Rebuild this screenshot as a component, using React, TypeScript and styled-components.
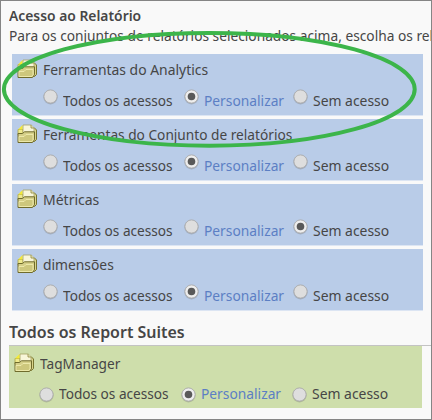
import React, { useLayoutEffect, useRef, useState } from 'react';
import styled, { createGlobalStyle } from 'styled-components';

const Global = createGlobalStyle`
  * { box-sizing: border-box; }
  body { margin: 0; background: #f9f9f9; }
`;

const Page = styled.main`
  position: relative;
  width: 432px;
  height: 420px;
  overflow: hidden;
  border: 1px solid #858585;
  background: #f9f9f9;
  color: #464646;
  font-family: 'Noto Sans', 'Open Sans', sans-serif;
  font-size: 15px;
  line-height: 20px;
`;

const Intro = styled.header`
  height: 53px;
  padding: 4px 0 0 8px;
`;

const Title = styled.h2`
  height: 20px;
  margin: 0;
  font-size: 14.8px;
  font-weight: 600;
`;

const Lead = styled.p`
  height: 20px;
  margin: 0;
`;

const List = styled.div`
  display: flex;
  flex-direction: column;
  gap: 4px;
  margin-left: 11px;
  width: 411px;
`;

const Group = styled.section<{ $green?: boolean }>`
  height: ${p => (p.$green ? 62 : 61)}px;
  width: ${p => (p.$green ? 413 : 411)}px;
  background: ${p => (p.$green ? '#cedeab' : '#b9cce8')};
  box-shadow: ${p => (p.$green ? 'none' : '0 0.6px 0 #c8d7ef')};
`;

const GroupHead = styled.div<{ $green?: boolean }>`
  display: flex;
  height: 31px;
  padding: ${p => (p.$green ? '7px 0 0 4.5px' : '5px 0 0 5px')};
`;

const GroupName = styled.div<{ $green?: boolean }>`
  margin-left: ${p => (p.$green ? 5.5 : 5)}px;
`;

const Options = styled.div<{ $green?: boolean }>`
  display: grid;
  grid-template-columns: ${p => (p.$green ? '142px 111px 1fr' : '141px 109px 1fr')};
  padding-left: ${p => (p.$green ? 30 : 31)}px;
`;

const Option = styled.label<{ $green?: boolean }>`
  display: flex;
  align-items: flex-start;
  gap: ${p => (p.$green ? 5 : 4.5)}px;
`;

const OptionText = styled.span<{ $link?: boolean; $green?: boolean }>`
  margin-top: ${p => (p.$green ? 6 : 5)}px;
  color: ${p => (p.$link ? '#5c7fc4' : '#464646')};
`;

const Heading = styled.h2`
  height: 36px;
  margin: 0 0 0 8px;
  padding-top: 12px;
  border-bottom: 1px solid #c3c3c3;
  font-size: 16.6px;
  font-weight: 600;
`;

const GreenWrap = styled.div`
  margin-left: 8px;
`;

const Clip = styled.span`
  display: block;
  white-space: nowrap;
`;

const Run = styled.span`
  display: inline-block;
  transform-origin: 0 0;
`;

const RadioSvg = styled.svg<{ $green?: boolean }>`
  display: block;
  flex: none;
  margin-top: ${p => (p.$green ? 10 : 4)}px;
`;

const Highlight = styled.svg`
  position: absolute;
  left: -1px;
  top: -1px;
  pointer-events: none;
`;

/* Condenses a single line of text so that it spans the given width. */
function Fit({ width, children }: { width: number; children: string }) {
  const ref = useRef<HTMLSpanElement>(null);
  const [scale, setScale] = useState(1);
  useLayoutEffect(() => {
    if (ref.current) setScale(width / ref.current.offsetWidth);
  }, [width, children]);
  return (
    <Clip>
      <Run ref={ref} style={{ transform: `scaleX(${scale})` }}>{children}</Run>
    </Clip>
  );
}

function Folder() {
  return (
    <svg width="21" height="20" viewBox="0 0 21 20">
      <path d="M14 3.5H17L19.5 6V15.5L17.5 17.5H14Z" fill="#d9d48c" stroke="#77732f" strokeLinejoin="round" />
      <path d="M1 5.5H6V11H1Z" fill="#efe98e" stroke="#a8a244" strokeWidth=".8" />
      <path d="M6 1H14.2L17 3.8V12H6Z" fill="#f8f6da" stroke="#a5a263" strokeWidth=".8" />
      <path d="M14 1V4H17" fill="#e8e5bd" stroke="#8d893c" strokeWidth=".8" />
      <path d="M1 18.5V9.5H5.5L7.5 7.8H17.5V15.8L15.5 18.5Z" fill="#d5cf88" stroke="#6f6b2c" strokeLinejoin="round" />
      <path d="M2 17.5V12.5H7L9 10.5H16V15.5L14.8 17.5Z" fill="#cdc77c" stroke="#f3efb4" strokeWidth=".8" />
      <path d="M1 5.5L5.5 1V5.5Z" fill="#f5ea35" />
    </svg>
  );
}

function Radio({ on, green }: { on: boolean; green?: boolean }) {
  return (
    <RadioSvg $green={green} width="15" height="16" viewBox="0 0 15 16">
      <circle cx="7.5" cy="8.3" r="7.1" fill="#777" opacity=".35" />
      <circle cx="7.5" cy="7.5" r="6.6" fill={on ? '#eeeeee' : '#dedede'} stroke="#acacac" strokeWidth=".9" />
      {on && <circle cx="7.5" cy="7.5" r="3.8" fill="#595959" />}
    </RadioSvg>
  );
}

function Access({ name, width, selected, green }: { name: string; width: number; selected: number; green?: boolean }) {
  const options: [string, number][] = [['Todos os acessos', 110], ['Personalizar', 80], ['Sem acesso', 76]];
  return (
    <Group $green={green}>
      <GroupHead $green={green}>
        <Folder />
        <GroupName $green={green}><Fit width={width}>{name}</Fit></GroupName>
      </GroupHead>
      <Options $green={green}>
        {options.map(([text, w], i) => (
          <Option key={text} $green={green}>
            <Radio on={i === selected} green={green} />
            <OptionText $link={i === 1} $green={green}><Fit width={w}>{text}</Fit></OptionText>
          </Option>
        ))}
      </Options>
    </Group>
  );
}

export default function App() {
  return (
    <>
      <Global />
      <Page>
        <Intro>
          <Title><Fit width={132}>Acesso ao Relatório</Fit></Title>
          <Lead><Fit width={424}>Para os conjuntos de relatórios selecionados acima, escolha os rel</Fit></Lead>
        </Intro>
        <List>
          <Access name="Ferramentas do Analytics" width={165} selected={1} />
          <Access name="Ferramentas do Conjunto de relatórios" width={249} selected={1} />
          <Access name="Métricas" width={56} selected={2} />
          <Access name="dimensões" width={71} selected={1} />
        </List>
        <Heading><Fit width={176}>Todos os Report Suites</Fit></Heading>
        <GreenWrap>
          <Access name="TagManager" width={80} selected={1} green />
        </GreenWrap>
        <Highlight width="432" height="420" viewBox="0 0 432 420">
          <ellipse cx="209.3" cy="89.3" rx="205.4" ry="56.4" fill="none" stroke="#3cb54a" strokeWidth="4" />
        </Highlight>
      </Page>
    </>
  );
}
